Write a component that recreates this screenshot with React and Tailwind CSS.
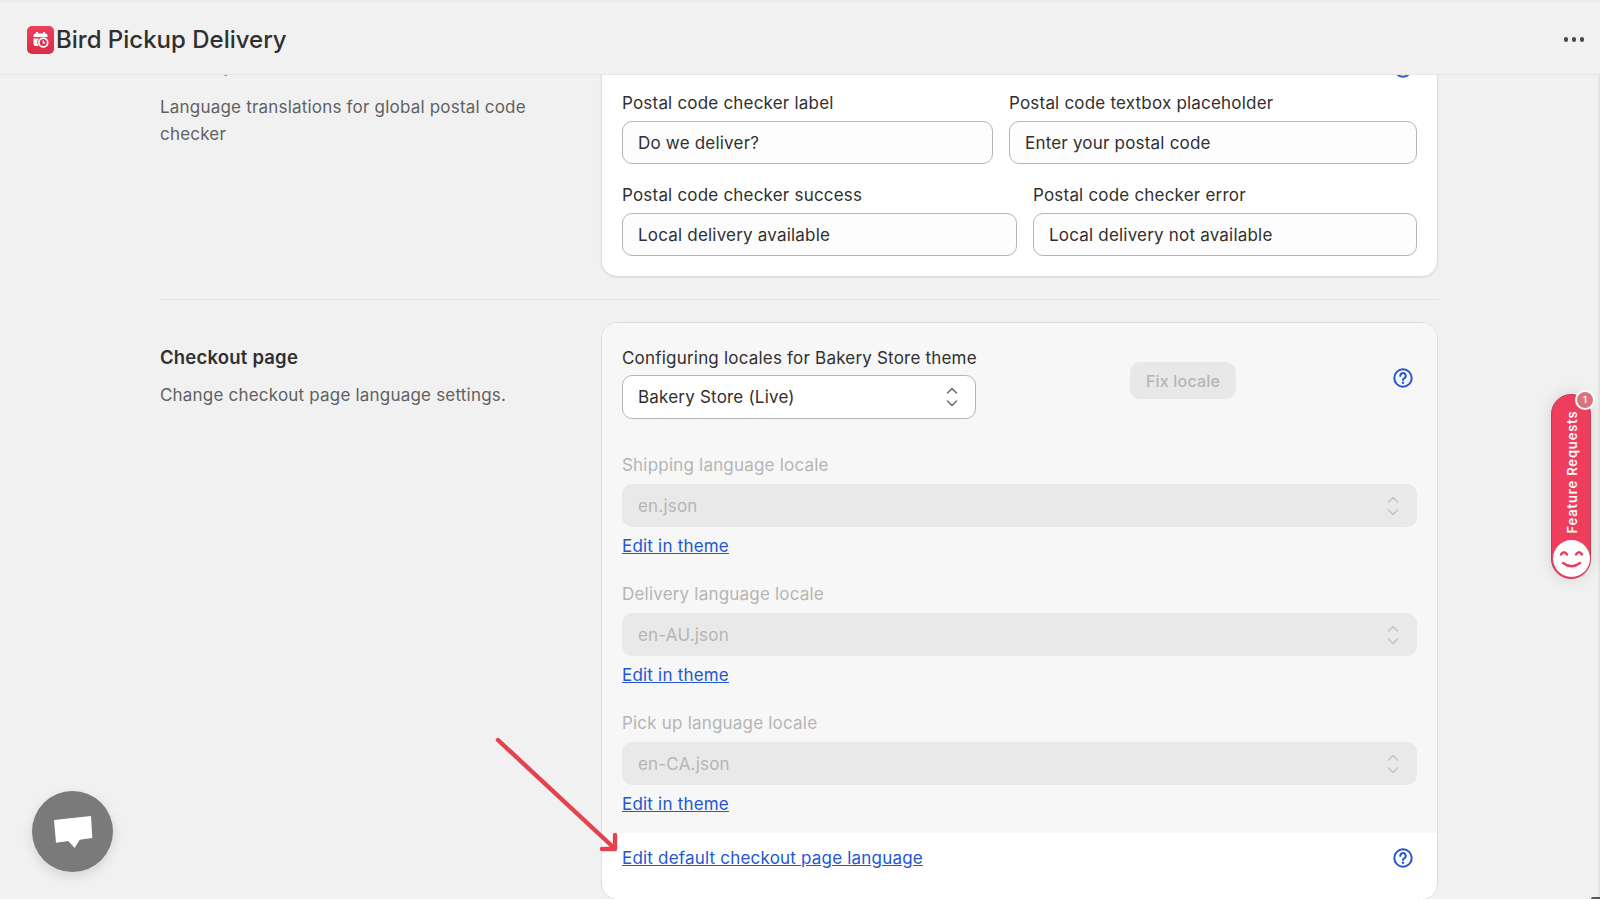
const font = { fontFamily: '"Inter", "Liberation Sans", sans-serif' };

function Chevrons({ cls }) {
  return (
    <svg width="14" height="22" viewBox="0 0 14 22" fill="none" stroke="currentColor" strokeWidth="1.500" strokeLinecap="round" strokeLinejoin="round" className={cls}>
      <path d="M2.500 7 7 2.500 11.500 7" />
      <path d="M2.500 15 7 19.500 11.500 15" />
    </svg>
  );
}

function Help() {
  return (
    <svg width="20" height="20" viewBox="0 0 20 20" fill="none" className="shrink-0 text-[#2456d3]">
      <circle cx="10" cy="10" r="8.700" stroke="currentColor" strokeWidth="2" />
      <path d="M7.300 7.900a2.700 2.700 0 1 1 4.100 2.200c-.9.500-1.400 1-1.400 1.900" stroke="currentColor" strokeWidth="2" strokeLinecap="round" />
      <circle cx="10" cy="14.800" r="1.200" fill="currentColor" />
    </svg>
  );
}

function Field({ label, value, className }) {
  return (
    <div className={className}>
      <div className="h-[24px] pt-[1px] text-[17px] leading-[24px] tracking-[0.2px] text-[#303030]">{label}</div>
      <div className="mt-[7px] flex h-[43px] items-center rounded-[10px] border border-[#b5b5b5] bg-[#fdfdfd] px-[15px] pt-[2px] text-[17px] tracking-[0.2px] text-[#303030]">{value}</div>
    </div>
  );
}

function DisabledSelect({ label, value, top }) {
  return (
    <div className={top}>
      <div className="h-[24px] text-[17px] leading-[24px] tracking-[0.2px] text-[#b5b5b5]">{label}</div>
      <div className="mt-[7px] flex h-[43px] items-center justify-between rounded-[10px] bg-[#e9e9e9] pl-[16px] pr-[17px] text-[17px] tracking-[0.2px] text-[#b5b5b5]">
        <span className="pt-[2px]">{value}</span>
        <Chevrons cls="text-[#c4c4c4]" />
      </div>
      <a className="mt-[7px] block h-[24px] text-[17px] leading-[24px] tracking-[0.2px] text-[#2456d3] underline">Edit in theme</a>
    </div>
  );
}

export default function App() {
  return (
    <div style={font} className="relative flex h-[899px] w-full flex-col overflow-hidden bg-[#f1f1f1]">
      <header className="relative z-10 flex h-[75px] shrink-0 items-center justify-between border-t-2 border-b border-t-[#ebebeb] border-b-[#e6e6e6] bg-[#f1f1f1] pl-[27px] pr-[16px] pt-[3px]">
        <div className="flex items-center gap-[1px]">
          <svg width="28" height="28" viewBox="0 0 28 28">
            <defs>
              <linearGradient id="lg" x1="0" y1="0" x2="0" y2="1">
                <stop offset="0" stopColor="#ee3f5a" />
                <stop offset="1" stopColor="#d82c46" />
              </linearGradient>
            </defs>
            <rect width="27" height="28" rx="5" fill="url(#lg)" />
            <path d="M6.500 9.500a2 2 0 0 1 2-2H9V6h2v1.500h5V6h2v1.500h.5a2 2 0 0 1 2 2V11h-14z" fill="#fff" />
            <path d="M6.500 12.500h5.500a6 6 0 0 0-.5 7.500h-3a2 2 0 0 1-2-2z" fill="#fff" />
            <circle cx="16.300" cy="16.500" r="4.400" fill="none" stroke="#fff" strokeWidth="1.700" />
            <path d="M16.300 14.500v2.300h1.800" fill="none" stroke="#fff" strokeWidth="1.200" />
          </svg>
          <span className="text-[24px] font-medium leading-[30px] text-[#303030]">Bird Pickup Delivery</span>
        </div>
        <div className="flex items-center gap-[3.500px]">
          <span className="size-[4.500px] rounded-full bg-[#4a4a4a]" />
          <span className="size-[4.500px] rounded-full bg-[#4a4a4a]" />
          <span className="size-[4.500px] rounded-full bg-[#4a4a4a]" />
        </div>
      </header>

      <main className="min-h-0 flex-1 overflow-hidden border-r-2 border-r-[#e4e4e4] pl-[160px] pr-[160px]">
        <div className="-mt-[40px]">
          <section className="flex">
            <div className="w-[441px] shrink-0 pr-[50px] pt-[18px]">
              <h2 className="h-[24px] text-[18.500px] font-semibold leading-[24px] tracking-[0.2px] text-[#303030]">Global postal code checker</h2>
              <p className="mt-[17px] text-[17px] leading-[27px] tracking-[0.2px] text-[#616161]">Language translations for global postal code checker</p>
            </div>
            <div className="flex-1 rounded-[16px] border border-[#dedede] bg-white px-[20px] pb-[20px] pt-[22px] shadow-[0_1px_2px_rgba(0,0,0,0.08)]">
              <div className="flex justify-end pr-[4px]"><Help /></div>
              <div className="mt-[12px] flex gap-[16px]">
                <Field label="Postal code checker label" value="Do we deliver?" className="w-[371px]" />
                <Field label="Postal code textbox placeholder" value="Enter your postal code" className="flex-1" />
              </div>
              <div className="mt-[18px] flex gap-[16px]">
                <Field label="Postal code checker success" value="Local delivery available" className="w-[395px]" />
                <Field label="Postal code checker error" value="Local delivery not available" className="flex-1" />
              </div>
            </div>
          </section>

          <hr className="mb-[22px] mt-[22px] border-[#e4e4e4]" />

          <section className="flex">
            <div className="w-[441px] shrink-0 pt-[23px]">
              <h2 className="h-[24px] text-[18.500px] font-semibold leading-[24px] tracking-[0.2px] text-[#303030]">Checkout page</h2>
              <p className="mt-[13px] text-[17px] leading-[27px] tracking-[0.2px] text-[#616161]">Change checkout page language settings.</p>
            </div>
            <div className="flex-1 overflow-hidden rounded-[16px] border border-[#dedede] bg-white">
              <div className="bg-[#f7f7f7] px-[20px] pb-[17px] pt-[23px]">
                <div className="flex items-start">
                  <div className="w-[354px] shrink-0">
                    <div className="h-[24px] whitespace-nowrap text-[17px] leading-[24px] tracking-[0.2px] text-[#303030]">Configuring locales for Bakery Store theme</div>
                    <div className="mt-[5px] flex h-[44px] items-center justify-between rounded-[10px] border border-[#b5b5b5] bg-white pl-[15px] pr-[16px] text-[17px] tracking-[0.2px] text-[#303030]">
                      <span className="pt-[2px]">Bakery Store (Live)</span>
                      <Chevrons cls="text-[#6b6b6b]" />
                    </div>
                  </div>
                  <button className="ml-[154px] mt-[16px] h-[37px] w-[106px] rounded-[10px] bg-[#e8e8e8] text-[16px] font-medium tracking-[0.2px] text-[#b5b5b5]">Fix locale</button>
                  <div className="ml-auto mr-[4px] mt-[22px]"><Help /></div>
                </div>
                <DisabledSelect top="mt-[34px]" label="Shipping language locale" value="en.json" />
                <DisabledSelect top="mt-[24px]" label="Delivery language locale" value="en-AU.json" />
                <DisabledSelect top="mt-[24px]" label="Pick up language locale" value="en-CA.json" />
              </div>
              <div className="flex items-center justify-between pb-[29px] pl-[20px] pr-[24px] pt-[13px]">
                <a className="h-[24px] text-[17px] leading-[24px] tracking-[0.2px] text-[#2456d3] underline">Edit default checkout page language</a>
                <Help />
              </div>
            </div>
          </section>
        </div>
      </main>

      <svg width="130" height="120" viewBox="0 0 130 120" fill="none" className="absolute left-[490px] top-[735px] z-20">
        <path d="M8 5 123 112" stroke="#e4424d" strokeWidth="4.400" strokeLinecap="round" />
        <path d="M125 100v14H112" stroke="#e4424d" strokeWidth="4.400" strokeLinecap="round" strokeLinejoin="round" />
      </svg>

      <button className="absolute left-[32px] top-[791px] z-20 flex size-[81px] items-center justify-center rounded-full bg-[#7a7a7a] shadow-[0_4px_12px_rgba(0,0,0,0.12)]">
        <svg width="40" height="34" viewBox="0 0 40 34">
          <path d="M1 5 38 1 39.300 23 26.700 24.700 21.600 33 15.300 26 3 27.700z" fill="#fff" />
        </svg>
      </button>

      <div className="absolute left-[1551px] top-[394px] z-20 h-[185px] w-[40px] rounded-full border border-[#c93a55] bg-[#ee3d5d] shadow-[0_0_16px_rgba(0,0,0,0.12)]">
        <span className="absolute left-[21px] top-[77px] -translate-x-1/2 -translate-y-1/2 -rotate-90 whitespace-nowrap text-[13px] font-semibold tracking-[0.85px] text-white">Feature Requests</span>
        <svg width="37" height="37" viewBox="0 0 37 37" className="absolute bottom-[1px] left-[1px]">
          <circle cx="18.500" cy="18.500" r="18.500" fill="#fff" />
          <path d="M8 14.500q3-4.500 6 0M23 14.500q3-4.500 6 0" stroke="#ee3d5d" strokeWidth="2.400" fill="none" strokeLinecap="round" />
          <path d="M10 23q8.500 6.500 17 0" stroke="#ee3d5d" strokeWidth="2.400" fill="none" strokeLinecap="round" />
        </svg>
        <span className="absolute -right-[5px] -top-[5px] flex size-[20px] items-center justify-center rounded-full border-2 border-white bg-[#d9737c] text-[9px] font-semibold text-white">1</span>
      </div>

      <span className="absolute bottom-0 right-0 z-20 h-[2px] w-[9px] rounded-tl-full bg-[#555555]" />
    </div>
  );
}
